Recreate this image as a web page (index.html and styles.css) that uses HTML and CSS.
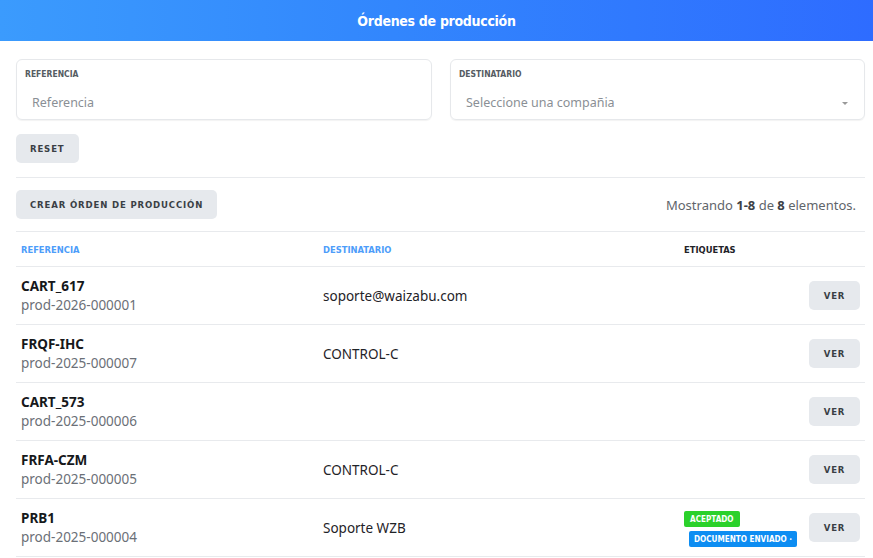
FILE: index.html
```html
<!DOCTYPE html>
<html lang="es">
<head>
<meta charset="utf-8">
<title>Órdenes de producción</title>
<link rel="stylesheet" href="styles.css">
</head>
<body>
<header class="topbar"><h1>Órdenes de producción</h1></header>
<main class="content">
  <section class="filters">
    <div class="field">
      <label class="field-label">REFERENCIA</label>
      <div class="field-input">Referencia</div>
    </div>
    <div class="field">
      <label class="field-label">DESTINATARIO</label>
      <div class="field-input select">Seleccione una compañia<span class="caret"></span></div>
    </div>
  </section>
  <div class="reset-row"><button class="btn">RESET</button></div>
  <div class="toolbar">
    <button class="btn">CREAR ÓRDEN DE PRODUCCIÓN</button>
    <div class="summary">Mostrando <b>1-8</b> de <b>8</b> elementos.</div>
  </div>
  <div class="table">
    <div class="thead">
      <div class="th blue">REFERENCIA</div>
      <div class="th blue">DESTINATARIO</div>
      <div class="th">ETIQUETAS</div>
      <div class="th"></div>
    </div>
    <div class="row">
      <div class="ref"><div class="code">CART_617</div><div class="sub">prod-2026-000001</div></div>
      <div class="dest">soporte@waizabu.com</div>
      <div class="tags"></div>
      <div class="act"><button class="btn small">VER</button></div>
    </div>
    <div class="row">
      <div class="ref"><div class="code">FRQF-IHC</div><div class="sub">prod-2025-000007</div></div>
      <div class="dest">CONTROL-C</div>
      <div class="tags"></div>
      <div class="act"><button class="btn small">VER</button></div>
    </div>
    <div class="row">
      <div class="ref"><div class="code">CART_573</div><div class="sub">prod-2025-000006</div></div>
      <div class="dest"></div>
      <div class="tags"></div>
      <div class="act"><button class="btn small">VER</button></div>
    </div>
    <div class="row">
      <div class="ref"><div class="code">FRFA-CZM</div><div class="sub">prod-2025-000005</div></div>
      <div class="dest">CONTROL-C</div>
      <div class="tags"></div>
      <div class="act"><button class="btn small">VER</button></div>
    </div>
    <div class="row">
      <div class="ref"><div class="code">PRB1</div><div class="sub">prod-2025-000004</div></div>
      <div class="dest">Soporte WZB</div>
      <div class="tags">
        <span class="badge green">ACEPTADO</span>
        <span class="badge blue-badge">DOCUMENTO ENVIADO ·</span>
      </div>
      <div class="act"><button class="btn small">VER</button></div>
    </div>
  </div>
</main>
</body>
</html>
```
FILE: styles.css
```css
* { box-sizing: border-box; }
html, body { margin: 0; padding: 0; }
body {
  font-family: "Noto Sans", "Open Sans", sans-serif;
  color: #1f2328;
  background: #fff;
  width: 873px;
  overflow: hidden;
}
.topbar {
  height: 41px;
  background: linear-gradient(90deg, #3b9bfd 0%, #3286fd 45%, #2e6cff 100%);
  display: flex;
  align-items: center;
  justify-content: center;
}
.topbar h1 {
  margin: 0;
  color: #fff;
  font-family: "DejaVu Sans Condensed", "Liberation Sans", sans-serif;
  font-weight: 700;
  font-size: 14px;
  letter-spacing: -0.3px;
}
.content { padding: 18px 8px 0 16px; }
.filters {
  display: grid;
  grid-template-columns: 416px 415px;
  gap: 18px;
}
.field {
  height: 61px;
  border: 1px solid #e6e8eb;
  border-radius: 6px;
  padding: 8px 8px 0 8px;
  box-shadow: 0 1px 1px rgba(0,0,0,0.05);
}
.field-label {
  display: block;
  font-family: "DejaVu Sans Condensed", "Liberation Sans", sans-serif;
  font-weight: 700;
  font-size: 8.5px;
  color: #555b62;
  line-height: 12px;
}
.field-input {
  margin-top: 14px;
  padding-left: 7px;
  font-size: 12.5px;
  color: #8a8f95;
  line-height: 18px;
  position: relative;
}
.caret {
  position: absolute;
  right: 8px;
  top: 8px;
  width: 0; height: 0;
  border-left: 3px solid transparent;
  border-right: 3px solid transparent;
  border-top: 3px solid #999;
}
.reset-row {
  padding: 14px 0 14px;
  border-bottom: 1px solid #e8eaed;
}
.btn {
  background: #e6e9ed;
  border: none;
  border-radius: 5px;
  height: 29px;
  padding: 0 14px;
  font-family: "DejaVu Sans Condensed", "Liberation Sans", sans-serif;
  font-weight: 700;
  font-size: 9.5px;
  letter-spacing: 0.85px;
  color: #3a3f45;
  cursor: pointer;
}
.btn.small { width: 51px; height: 29px; padding: 0; }
.toolbar {
  display: flex;
  justify-content: space-between;
  align-items: center;
  padding: 12px 0 12px;
  border-bottom: 1px solid #e8eaed;
}
.summary {
  font-size: 13px;
  color: #5f656b;
  padding-right: 9px;
}
.summary b { color: #3c4147; }
.table { width: 849px; }
.thead, .row {
  display: grid;
  grid-template-columns: 302px 361px 124px 62px;
}
.thead {
  height: 35px;
  align-items: center;
  border-bottom: 1px solid #e8eaed;
}
.th {
  padding-left: 5px;
  font-family: "DejaVu Sans Condensed", "Liberation Sans", sans-serif;
  font-weight: 700;
  font-size: 9.3px;
  color: #1f2328;
}
.th.blue { color: #4d9dfa; }
.row {
  height: 58px;
  align-items: center;
  border-bottom: 1px solid #e8eaed;
}
.ref { padding-left: 5px; padding-top: 1px; }
.code { font-weight: 700; font-size: 13.5px; line-height: 19px; color: #16181b; }
.sub { font-size: 13.5px; line-height: 19px; color: #6b7077; }
.dest { padding-left: 5px; font-size: 13.5px; color: #1f2328; }
.tags {
  display: flex;
  flex-direction: column;
  align-items: flex-start;
  gap: 4px;
  padding-left: 5px;
  padding-top: 2px;
}
.badge {
  font-family: "DejaVu Sans Condensed", "Liberation Sans", sans-serif;
  font-weight: 700;
  font-size: 8.1px;
  color: #fff;
  border-radius: 2px;
  padding: 0 5px;
  height: 16px;
  line-height: 16px;
}
.badge.green { background: #2bd12b; padding: 0 6px; }
.badge.blue-badge { background: #0d8df2; margin-left: 5px; }
.act { display: flex; justify-content: flex-end; padding-right: 5px; }
```
